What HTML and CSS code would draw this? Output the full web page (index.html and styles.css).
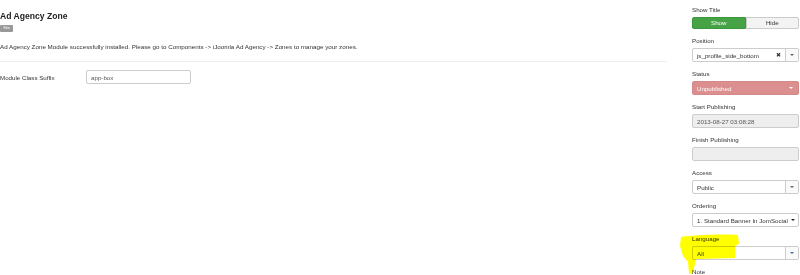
FILE: index.html
```html
<!DOCTYPE html>
<html lang="en">
<head>
  <meta charset="UTF-8">
  <meta name="viewport" content="width=device-width, initial-scale=1.0">
  <title>Ad Agency Zone</title>
  <link rel="stylesheet" href="styles.css">
</head>
<body>
  <div class="page">
    <div class="main">
      <h2>Ad Agency Zone</h2>
      <span class="badge">Site</span>
      <p class="desc">Ad Agency Zone Module successfully installed. Please go to Components -&gt; iJoomla Ad Agency -&gt; Zones to manage your zones.</p>
      <hr>
      <div class="form-row">
        <label for="suffix">Module Class Suffix</label>
        <input type="text" id="suffix" class="text-input" value="app-box">
      </div>
    </div>

    <div class="sidebar">
      <div class="field">
        <div class="label">Show Title</div>
        <div class="toggle">
          <span class="toggle-btn on">Show</span>
          <span class="toggle-btn">Hide</span>
        </div>
      </div>

      <div class="field">
        <div class="label">Position</div>
        <div class="chosen">
          <span class="chosen-text">js_profile_side_bottom</span>
          <span class="chosen-clear">&#x2716;</span>
          <span class="chosen-drop"><span class="caret"></span></span>
        </div>
      </div>

      <div class="field">
        <div class="label">Status</div>
        <div class="status">
          <span>Unpublished</span>
          <span class="caret caret-white"></span>
        </div>
      </div>

      <div class="field">
        <div class="label">Start Publishing</div>
        <div class="box box-disabled">2013-08-27 03:08:28</div>
      </div>

      <div class="field">
        <div class="label">Finish Publishing</div>
        <div class="box box-disabled"></div>
      </div>

      <div class="field">
        <div class="label">Access</div>
        <div class="chosen">
          <span class="chosen-text">Public</span>
          <span class="chosen-drop"><span class="caret"></span></span>
        </div>
      </div>

      <div class="field">
        <div class="label">Ordering</div>
        <div class="box native">
          <span class="chosen-text">1. Standard Banner In JomSocial</span>
          <span class="caret caret-dark"></span>
        </div>
      </div>

      <div class="field">
        <div class="label">Language</div>
        <div class="chosen">
          <span class="chosen-text">All</span>
          <span class="chosen-drop"><span class="caret caret-blue"></span></span>
        </div>
      </div>

      <div class="field">
        <div class="label">Note</div>
      </div>
    </div>
  </div>

  <svg class="highlight" width="70" height="45" viewBox="676 230 70 45">
    <path d="M681,237 C695,235 720,234 738,235 L739,244 L735,246 L735,258 L696,259 L694,268 L692,274 L689,273 L688,262 L683,256 L680,246 Z" fill="#ffff00"/>
  </svg>
</body>
</html>
```

FILE: styles.css
```css
* {
  margin: 0;
  padding: 0;
  box-sizing: border-box;
  font-family: 'Liberation Sans', Arial, Helvetica, sans-serif;
}

body {
  background: #fff;
  color: #333;
  width: 800px;
  height: 275px;
  overflow: hidden;
  position: relative;
}

.page {
  display: flex;
}

.main {
  width: 667px;
  padding-top: 11px;
}

h2 {
  font-size: 8.6px;
  line-height: 10px;
  font-weight: bold;
  color: #222;
}

.badge {
  display: inline-block;
  margin-top: 4px;
  height: 7px;
  width: 13px;
  background: #999;
  color: #fff;
  font-size: 3.8px;
  line-height: 7px;
  text-align: center;
  border-radius: 1px;
  vertical-align: top;
}

.desc {
  font-size: 6.25px;
  line-height: 8px;
  margin-top: 4px;
}

hr {
  border: none;
  border-top: 1px solid #eee;
  margin-top: 10px;
}

.form-row {
  display: flex;
  align-items: center;
  margin-top: 8px;
}

.form-row label {
  width: 86px;
  font-size: 6.2px;
}

.text-input {
  width: 105px;
  height: 14px;
  border: 1px solid #ccc;
  border-radius: 2px;
  padding: 0 4px;
  font-size: 6.2px;
  color: #555;
}

.sidebar {
  width: 107px;
  margin-left: 25px;
  padding-top: 6px;
}

.field {
  margin-bottom: 8px;
}

.label {
  height: 8px;
  line-height: 8px;
  font-size: 6.2px;
  margin-bottom: 3px;
}

.toggle {
  display: flex;
  height: 12px;
  font-size: 6.2px;
}

.toggle-btn {
  flex: 1;
  text-align: center;
  line-height: 10px;
  border: 1px solid #ccc;
  background: #f3f3f3;
  color: #333;
  border-radius: 0 2px 2px 0;
}

.toggle-btn.on {
  background: #45a245;
  border-color: #3d983d;
  color: #fff;
  border-radius: 2px 0 0 2px;
}

.chosen,
.box,
.status {
  display: flex;
  align-items: center;
  height: 14px;
  border: 1px solid #ccc;
  border-radius: 2px;
  font-size: 6.2px;
  color: #333;
  background: #fff;
}

.chosen-text {
  flex: 1;
  padding-left: 4px;
  white-space: nowrap;
  overflow: hidden;
}

.chosen-clear {
  font-size: 5.5px;
  color: #333;
  margin-right: 4px;
}

.chosen-drop {
  width: 13px;
  height: 100%;
  border-left: 1px solid #ccc;
  background: #fafafa;
  display: flex;
  align-items: center;
  justify-content: center;
}

.caret {
  width: 0;
  height: 0;
  border-left: 2px solid transparent;
  border-right: 2px solid transparent;
  border-top: 2px solid #666;
}

.caret-white {
  border-top-color: #fff;
  margin-right: 5px;
}

.caret-dark {
  border-top-color: #222;
  margin-right: 3px;
}

.caret-blue {
  border-top-color: #3a6ea5;
}

.status {
  background: #db8f8f;
  border-color: #d58888;
  color: #fff;
  padding-left: 4px;
  justify-content: space-between;
}

.box {
  padding-left: 4px;
}

.box-disabled {
  background: #eee;
  color: #555;
}

.native {
  padding-left: 0;
}

.native .chosen-text {
  padding-left: 4px;
  padding-right: 3px;
}

.highlight {
  position: absolute;
  left: 676px;
  top: 230px;
  mix-blend-mode: multiply;
}
```
